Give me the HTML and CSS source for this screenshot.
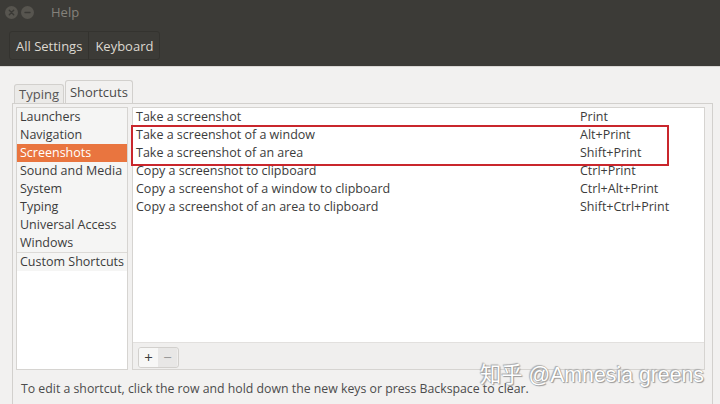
FILE: index.html
```html
<!DOCTYPE html>
<html>
<head>
<meta charset="utf-8">
<link rel="stylesheet" href="styles.css">
</head>
<body>
<div class="window">
  <div class="titlebar">
    <span class="wbtn"><svg width="13" height="13" viewBox="0 0 13 13"><circle cx="6.5" cy="6.5" r="6.5" fill="#57554f"/><path d="M4.3 4.3 L8.7 8.7 M8.7 4.3 L4.3 8.7" stroke="#3a3935" stroke-width="1.4" stroke-linecap="round"/></svg></span>
    <span class="wbtn"><svg width="13" height="13" viewBox="0 0 13 13"><circle cx="6.5" cy="6.5" r="6.5" fill="#57554f"/><path d="M4 6.5 L9 6.5" stroke="#3a3935" stroke-width="1.4" stroke-linecap="round"/></svg></span>
    <span class="title">Help</span>
  </div>
  <div class="toolbar">
    <div class="crumbs">
      <span class="crumb">All Settings</span>
      <span class="crumb">Keyboard</span>
    </div>
  </div>
  <div class="content">
    <div class="tabs">
      <span class="tab">Typing</span>
      <span class="tab active">Shortcuts</span>
    </div>
    <div class="notebook">
      <div class="panes">
        <div class="cats">
          <div class="cat">Launchers</div>
          <div class="cat">Navigation</div>
          <div class="cat selected">Screenshots</div>
          <div class="cat">Sound and Media</div>
          <div class="cat">System</div>
          <div class="cat">Typing</div>
          <div class="cat">Universal Access</div>
          <div class="cat last">Windows</div>
          <div class="cat">Custom Shortcuts</div>
        </div>
        <div class="shortcuts">
          <div class="rows">
            <div class="row"><span class="name">Take a screenshot</span><span class="key">Print</span></div>
            <div class="row"><span class="name">Take a screenshot of a window</span><span class="key">Alt+Print</span></div>
            <div class="row"><span class="name">Take a screenshot of an area</span><span class="key">Shift+Print</span></div>
            <div class="row"><span class="name">Copy a screenshot to clipboard</span><span class="key">Ctrl+Print</span></div>
            <div class="row"><span class="name">Copy a screenshot of a window to clipboard</span><span class="key">Ctrl+Alt+Print</span></div>
            <div class="row"><span class="name">Copy a screenshot of an area to clipboard</span><span class="key">Shift+Ctrl+Print</span></div>
          </div>
          <div class="listbar">
            <div class="pm">
              <span class="pmb plus">+</span>
              <span class="pmb minus">−</span>
            </div>
          </div>
        </div>
      </div>
      <div class="hint">To edit a shortcut, click the row and hold down the new keys or press Backspace to clear.</div>
    </div>
  </div>
</div>
<div class="highlight"></div>
<div class="watermark">知乎 @Amnesia greens</div>
</body>
</html>
```
FILE: styles.css
```css
html, body {
  margin: 0;
  padding: 0;
}
body {
  width: 720px;
  height: 404px;
  overflow: hidden;
  position: relative;
  background: #f2f1f0;
  font-family: "Open Sans", "Noto Sans", sans-serif;
  font-size: 12.5px;
  color: #3c3c3c;
}
.window {
  display: flex;
  flex-direction: column;
  height: 404px;
}
.titlebar {
  height: 24px;
  background: #3c3b37;
  display: flex;
  align-items: center;
  padding-left: 5px;
  gap: 3px;
}
.wbtn {
  display: flex;
  width: 13px;
  height: 13px;
}
.title {
  margin-left: 14px;
  color: #85827b;
  font-size: 13px;
}
.toolbar {
  height: 43px;
  background: #3c3b37;
  border-bottom: 1px solid #dad8d5;
  display: flex;
  align-items: flex-start;
  padding: 7px 0 0 9px;
  box-sizing: border-box;
}
.crumbs {
  display: flex;
  height: 27px;
  border: 1px solid #34332f;
  border-radius: 3px;
}
.crumb {
  display: flex;
  align-items: center;
  padding: 0 6px;
  color: #dcd8d0;
  font-size: 13px;
}
.crumb + .crumb {
  border-left: 1px solid #33322e;
}
.content {
  flex: 1;
  padding: 13px 0 0 12px;
  display: flex;
  flex-direction: column;
}
.tabs {
  display: flex;
  align-items: flex-end;
  height: 23px;
  padding-left: 2px;
}
.tab {
  height: 18px;
  padding: 0 4px;
  display: flex;
  align-items: center;
  border: 1px solid #d2d0cd;
  border-bottom: none;
  border-radius: 3px 3px 0 0;
  background: #ebeae8;
  color: #555;
  font-size: 13px;
}
.tab.active {
  height: 22px;
  background: #f2f1f0;
  margin-left: 1px;
  color: #4a4a4a;
}
.notebook {
  width: 696px;
  flex: 1;
  border: 1px solid #d2d0cd;
  border-bottom: none;
  padding: 3px 0 0 3px;
  display: flex;
  flex-direction: column;
}
.panes {
  display: flex;
  gap: 4px;
  height: 263px;
}
.cats {
  width: 110px;
  border: 1px solid #d6d4d1;
  background: #ffffff;
  display: flex;
  flex-direction: column;
}
.cat {
  height: 18px;
  line-height: 18px;
  padding-left: 3px;
  background: #f5f5f4;
  white-space: nowrap;
}
.cat.last {
  border-bottom: 1px solid #dcdad7;
}
.cat.selected {
  background: #e9753f;
  color: #ffffff;
}
.shortcuts {
  width: 571px;
  border: 1px solid #d6d4d1;
  background: #ffffff;
  display: flex;
  flex-direction: column;
}
.rows {
  flex: 1;
}
.row {
  height: 18px;
  line-height: 18px;
  display: flex;
  padding-left: 3px;
  white-space: nowrap;
}
.name {
  width: 444px;
}
.listbar {
  height: 27px;
  background: #f0efee;
  border-top: 1px solid #e2e0de;
  padding: 4px 0 0 5px;
  box-sizing: border-box;
}
.pm {
  display: flex;
  width: 39px;
  height: 19px;
  border: 1px solid #d2d0cd;
  border-radius: 3px;
  overflow: hidden;
}
.pmb {
  width: 19px;
  display: flex;
  align-items: center;
  justify-content: center;
  font-size: 15px;
  line-height: 1;
}
.plus {
  background: #f7f7f6;
  color: #3c3c3c;
}
.minus {
  background: #e8e7e6;
  color: #9a9a9a;
}
.hint {
  margin-top: 10px;
  padding-left: 5px;
  color: #4c4c4c;
  font-size: 12.3px;
  white-space: nowrap;
}
.highlight {
  position: absolute;
  left: 131px;
  top: 125px;
  width: 534px;
  height: 37px;
  border: 2px solid #c9262c;
}
.watermark {
  position: absolute;
  left: 480px;
  top: 357px;
  font-family: "Liberation Sans", "Noto Sans CJK SC", sans-serif;
  font-size: 21.3px;
  color: #ffffff;
  text-shadow: 0 0 1px #8a8a8a, 1px 1px 1px #9a9a9a, -1px -1px 1px #b0b0b0;
  white-space: nowrap;
}
```
